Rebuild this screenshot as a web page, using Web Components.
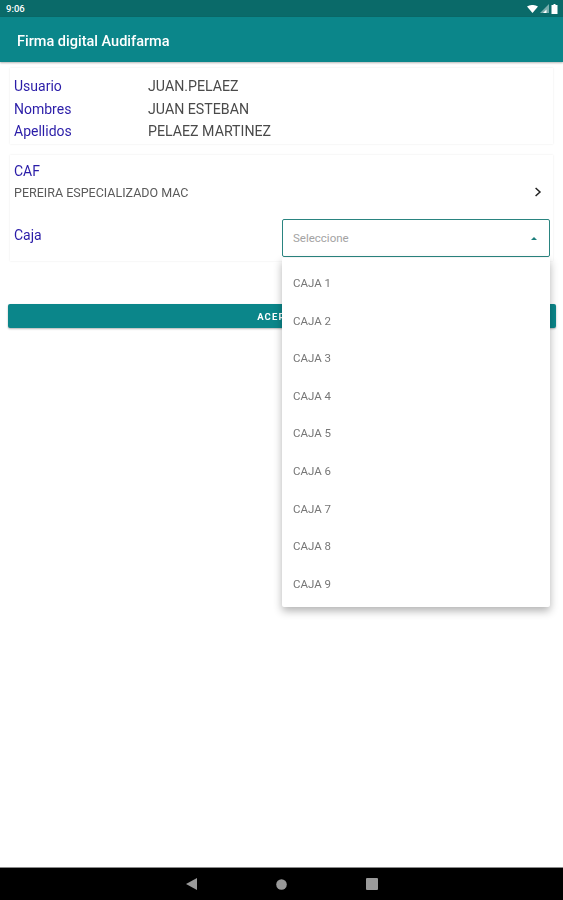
<!DOCTYPE html>
<html lang="es">
<head>
<meta charset="utf-8">
<title>Firma digital Audifarma</title>
<style>
  html, body { margin: 0; height: 100%; background: #fff; overflow: hidden; }
  body { font-family: Roboto, "Liberation Sans", sans-serif; }
</style>
</head>
<body>
<app-screen>
  <status-bar slot="status" time="9:06"></status-bar>
  <app-toolbar slot="toolbar">Firma digital Audifarma</app-toolbar>

  <info-card>
    <info-row label="Usuario">JUAN.PELAEZ</info-row>
    <info-row label="Nombres">JUAN ESTEBAN</info-row>
    <info-row label="Apellidos">PELAEZ MARTINEZ</info-row>
  </info-card>

  <caf-card name="PEREIRA ESPECIALIZADO MAC">
    <select-box placeholder="Seleccione" options="CAJA 1,CAJA 2,CAJA 3,CAJA 4,CAJA 5,CAJA 6,CAJA 7,CAJA 8,CAJA 9"></select-box>
  </caf-card>

  <accept-button>ACEPTAR</accept-button>

  <nav-bar slot="nav"></nav-bar>
</app-screen>

<script>
  // Page frame: status bar, toolbar, content and the android navigation bar
  customElements.define('app-screen',
    class extends HTMLElement {
      constructor() {
        super()
        this.attachShadow({ mode: 'open' }).innerHTML = `
          <style>
            :host { display: flex; flex-direction: column; height: 900px; filter: blur(.45px); }
            main { flex: 1; display: flex; flex-direction: column; padding: 6px 0 0; }
          </style>
          <slot name="status"></slot>
          <slot name="toolbar"></slot>
          <main><slot></slot></main>
          <slot name="nav"></slot>
        `
      }
    }
  )

  customElements.define('status-bar',
    class extends HTMLElement {
      constructor() {
        super()
        this.attachShadow({ mode: 'open' }).innerHTML = `
          <style>
            :host {
              display: flex; align-items: center; justify-content: space-between;
              height: 17px; padding: 0 5px 0 6px; background: #0a6a69; color: #fff;
              font: 500 9.5px Roboto, sans-serif;
            }
            .icons { display: flex; align-items: center; gap: 2px; }
            svg { display: block; }
          </style>
          <span id="time"></span>
          <span class="icons">
            <svg width="11" height="8" viewBox="0 0 11 8"><path d="M0 1.4 C3.3 -.5 7.7 -.5 11 1.4 L5.5 8Z" fill="#fff"/></svg>
            <svg width="9" height="9" viewBox="0 0 9 9"><path d="M0 9 L9 0 V9Z" fill="#fff" opacity=".45"/><path d="M3 9 L6.5 5.5 V9Z" fill="#fff"/></svg>
            <svg width="7" height="10" viewBox="0 0 7 10"><path d="M2.5 0 H4.5 V1 H6.5 V10 H.5 V1 H2.5Z" fill="#fff"/></svg>
          </span>
        `
        this.shadowRoot.querySelector('#time').textContent = this.getAttribute('time')
      }
    }
  )

  customElements.define('app-toolbar',
    class extends HTMLElement {
      constructor() {
        super()
        this.attachShadow({ mode: 'open' }).innerHTML = `
          <style>
            :host {
              display: flex; align-items: center;
              height: 45px; padding: 4px 17px 0; box-sizing: border-box;
              background: #0b868a; color: #fff;
              font: 500 14.5px Roboto, sans-serif;
              box-shadow: 0 1px 2px rgba(0, 0, 0, .3);
              position: relative;
            }
          </style>
          <slot></slot>
        `
      }
    }
  )

  customElements.define('info-card',
    class extends HTMLElement {
      constructor() {
        super()
        this.attachShadow({ mode: 'open' }).innerHTML = `
          <style>
            :host {
              display: block; margin: 0 10px; padding: 7px 4px 2px;
              height: 76px; box-sizing: border-box;
              background: #fff; box-shadow: 0 0 2px rgba(0, 0, 0, .09);
            }
          </style>
          <slot></slot>
        `
      }
    }
  )

  customElements.define('info-row',
    class extends HTMLElement {
      constructor() {
        super()
        this.attachShadow({ mode: 'open' }).innerHTML = `
          <style>
            :host {
              display: grid; grid-template-columns: 134px 1fr; align-items: center;
              height: 22.5px; font: 14px Roboto, sans-serif;
            }
            .label { color: #2a1ca8; }
            .value { color: #4a4a4a; font-size: 14.2px; }
          </style>
          <span class="label"></span>
          <span class="value"><slot></slot></span>
        `
        this.shadowRoot.querySelector('.label').textContent = this.getAttribute('label')
      }
    }
  )

  customElements.define('caf-card',
    class extends HTMLElement {
      constructor() {
        super()
        this.attachShadow({ mode: 'open' }).innerHTML = `
          <style>
            :host {
              display: block; margin: 11px 10px 0; padding: 6px 3px 0 4px;
              height: 106px; box-sizing: border-box;
              background: #fff; box-shadow: 0 0 2px rgba(0, 0, 0, .09);
              font-family: Roboto, sans-serif;
            }
            .title { height: 20px; line-height: 20px; font-size: 14px; color: #2a1ca8; }
            .place {
              display: flex; justify-content: space-between; align-items: center;
              height: 22px; font-size: 12.5px; color: #5a5a5a;
            }
            .place svg { margin-right: 8px; }
            .caja { display: flex; justify-content: space-between; margin-top: 16px; }
            .caja span { font-size: 14px; line-height: 32px; height: 32px; color: #2a1ca8; }
          </style>
          <div class="title">CAF</div>
          <div class="place">
            <span id="name"></span>
            <svg width="8" height="10" viewBox="0 0 8 10"><path d="M1.6 1 L6 5 L1.6 9" fill="none" stroke="#222" stroke-width="1.5"/></svg>
          </div>
          <div class="caja">
            <span>Caja</span>
            <slot></slot>
          </div>
        `
        this.shadowRoot.querySelector('#name').textContent = this.getAttribute('name')
      }
    }
  )

  // Opened dropdown: the field stays in flow, the option list lies over the page
  customElements.define('select-box',
    class extends HTMLElement {
      constructor() {
        super()
        this.attachShadow({ mode: 'open' }).innerHTML = `
          <style>
            :host { display: block; position: relative; width: 268px; font-family: Roboto, sans-serif; }
            .field {
              display: flex; align-items: center; justify-content: space-between;
              height: 38px; box-sizing: border-box; padding: 0 12px 0 10px;
              border: 1px solid #2a8480; border-radius: 2px;
              font-size: 11.5px; color: #a3a3a3; background: #fff;
            }
            .arrow { width: 0; height: 0; border: 3.5px solid transparent; border-top: 0; border-bottom: 3.5px solid #1d7f7c; }
            ul {
              position: absolute; z-index: 5; left: 0; right: 0; top: 39px;
              margin: 0; padding: 7px 0 4px; list-style: none; background: #fff;
              box-shadow: 0 4px 8px rgba(0, 0, 0, .3);
              border-radius: 0 0 2px 2px;
            }
            li {
              height: 37.6px; line-height: 37.6px; padding-left: 11px;
              font-size: 11.5px; color: #777;
            }
          </style>
          <div class="field"><span id="hint"></span><span class="arrow"></span></div>
          <ul></ul>
        `
        this.shadowRoot.querySelector('#hint').textContent = this.getAttribute('placeholder')
        const list = this.shadowRoot.querySelector('ul')
        this.getAttribute('options').split(',').forEach(option => {
          const item = document.createElement('li')
          item.textContent = option
          list.append(item)
        })
      }
    }
  )

  customElements.define('accept-button',
    class extends HTMLElement {
      constructor() {
        super()
        this.attachShadow({ mode: 'open' }).innerHTML = `
          <style>
            :host {
              display: flex; align-items: center; justify-content: center;
              height: 24px; margin: 43px 7px 0 8px; border-radius: 2px;
              background: #0b868a; color: #fff;
              font: 700 9.5px Roboto, sans-serif; letter-spacing: 1.1px;
              box-shadow: 0 1px 2px rgba(0, 0, 0, .3);
            }
          </style>
          <slot></slot>
        `
      }
    }
  )

  customElements.define('nav-bar',
    class extends HTMLElement {
      constructor() {
        super()
        this.attachShadow({ mode: 'open' }).innerHTML = `
          <style>
            :host {
              display: flex; align-items: center; justify-content: center; gap: 78.5px;
              height: 33px; background: #000; border-top: 1px solid #8a8a8a; box-sizing: border-box;
            }
            svg { display: block; }
          </style>
          <svg width="12" height="12" viewBox="0 0 12 12"><path d="M11 0 V12 L0 6Z" fill="#9a9a9a"/></svg>
          <svg width="11" height="11" viewBox="0 0 11 11"><circle cx="5.5" cy="5.5" r="5.3" fill="#9a9a9a"/></svg>
          <svg width="12" height="12" viewBox="0 0 12 12"><rect width="12" height="12" rx="1" fill="#9a9a9a"/></svg>
        `
      }
    }
  )
</script>
</body>
</html>
